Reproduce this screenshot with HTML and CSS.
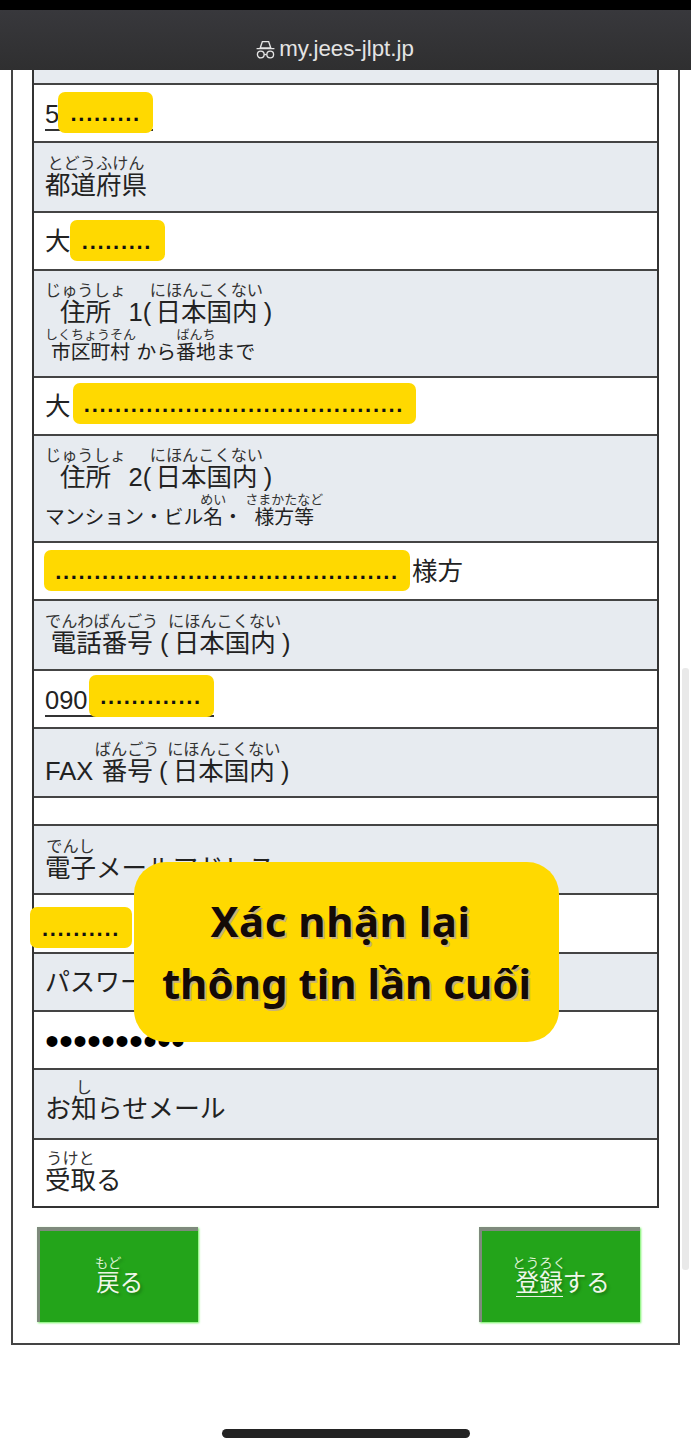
FILE: index.html
```html
<!DOCTYPE html>
<html lang="ja">
<head>
<meta charset="utf-8">
<title>my.jees-jlpt.jp</title>
<link rel="stylesheet" href="styles.css">
</head>
<body>
<div class="screen">
  <header class="browser-bar">
    <div class="address">
      <svg class="incognito" viewBox="0 0 20 20" width="21" height="21" aria-hidden="true">
        <path d="M7 2.5h6l2 6H5zM1.5 9.2h17" fill="none" stroke="currentColor" stroke-width="1.3"/>
        <circle cx="5.5" cy="14.8" r="3.2" fill="none" stroke="currentColor" stroke-width="1.3"/>
        <circle cx="14.5" cy="14.8" r="3.2" fill="none" stroke="currentColor" stroke-width="1.3"/>
        <path d="M8.7 14.8h2.6" fill="none" stroke="currentColor" stroke-width="1.3"/>
      </svg>
      <span>my.jees-jlpt.jp</span>
    </div>
  </header>

  <main class="frame">
    <div class="table">
      <div class="row label h14"></div>

      <div class="row h58">
        <div class="value underlined">5<span class="mask m-post">.........</span></div>
      </div>

      <div class="row label h70 nudge">
        <div class="line"><ruby>都道府県<rt>とどうふけん</rt></ruby></div>
      </div>

      <div class="row h58">
        <div class="value">大<span class="mask m-pref">.........</span></div>
      </div>

      <div class="row label h107 nudge-s">
        <div class="line"><ruby>住所<rt>じゅうしょ</rt></ruby><span class="latin">1(</span><ruby>日本国内<rt>にほんこくない</rt></ruby><span class="paren">)</span></div>
        <div class="line sub"><ruby>市区町村<rt>しくちょうそん</rt></ruby><span class="after-ruby">から</span><ruby>番地<rt>ばんち</rt></ruby>まで</div>
      </div>

      <div class="row h58">
        <div class="value">大<span class="mask m-addr1">.........................................</span></div>
      </div>

      <div class="row label h107 nudge-s">
        <div class="line"><ruby>住所<rt>じゅうしょ</rt></ruby><span class="latin">2(</span><ruby>日本国内<rt>にほんこくない</rt></ruby><span class="paren">)</span></div>
        <div class="line sub">マンション・ビル<ruby>名<rt>めい</rt></ruby>・ <ruby>様方等<rt>さまかたなど</rt></ruby></div>
      </div>

      <div class="row h58">
        <div class="value"><span class="mask m-addr2">............................................</span>様方</div>
      </div>

      <div class="row label h70 nudge">
        <div class="line"><ruby>電話番号<rt>でんわばんごう</rt></ruby><span class="paren-open">(</span><ruby>日本国内<rt>にほんこくない</rt></ruby><span class="paren">)</span></div>
      </div>

      <div class="row h58">
        <div class="value underlined">090<span class="mask m-tel">.............</span></div>
      </div>

      <div class="row label h69 nudge">
        <div class="line"><span class="fax">FAX</span><ruby>番号<rt>ばんごう</rt></ruby><span class="paren-open">(</span><ruby>日本国内<rt>にほんこくない</rt></ruby><span class="paren">)</span></div>
      </div>

      <div class="row h28"></div>

      <div class="row label h69 nudge">
        <div class="line"><ruby>電子<rt>でんし</rt></ruby>メールアドレス</div>
      </div>

      <div class="row h59">
        <div class="value"><span class="mask m-mail">..........</span></div>
      </div>

      <div class="row label h58">
        <div class="value small">パスワード</div>
      </div>

      <div class="row h58">
        <div class="password">••••••••••</div>
      </div>

      <div class="row label h70 lift">
        <div class="line"><span class="wide">お<ruby>知<rt>し</rt></ruby>らせメール</span></div>
      </div>

      <div class="row h68">
        <div class="line"><ruby>受取<rt>うけと</rt></ruby>る</div>
      </div>
    </div>

    <div class="actions">
      <button class="btn" type="button"><ruby>戻<rt>もど</rt></ruby>る</button>
      <button class="btn" type="button"><ruby><span class="under">登録</span><rt>とうろく</rt></ruby>する</button>
    </div>
  </main>

  <div class="scrollbar"></div>

  <aside class="callout">
    <p class="first">Xác nhận lại</p>
    <p>thông tin lần cuối</p>
  </aside>

  <div class="home-indicator"></div>
</div>
</body>
</html>
```
FILE: styles.css
```css
* { box-sizing: border-box; }
html, body { margin: 0; padding: 0; }
body {
  background: #fff;
  color: #222;
  font-family: "Liberation Sans", "Noto Sans CJK JP", sans-serif;
}
.screen {
  position: relative;
  width: 691px;
  height: 1443px;
  overflow: hidden;
  background: #fff;
  border-top: 10px solid #000;
}
.browser-bar {
  height: 60px;
  background: linear-gradient(#38383c, #2f2f30);
  color: #e4e4e4;
  display: flex;
  align-items: flex-end;
  justify-content: center;
  padding: 0 22px 9px 0;
}
.address {
  display: flex;
  align-items: center;
  gap: 3px;
  font-size: 22.3px;
  line-height: 24px;
}
.incognito { flex: none; }
.frame {
  margin: 0 11px;
  width: 669px;
  height: 1275px;
  border: 2px solid #444;
  border-top: 0;
  padding: 0 19px;
}
.table {
  border-left: 2px solid #333;
  border-right: 2px solid #333;
  border-bottom: 2px solid #333;
}
.row {
  display: flex;
  flex-direction: column;
  justify-content: center;
  padding: 0 11px;
  border-bottom: 2px solid #444;
  background: #fff;
  overflow: visible;
}
.row:last-child { border-bottom: 0; }
.label { background: #e7ebf0; }
.nudge { padding-top: 2px; }
.nudge-s { padding-bottom: 2px; }
.lift { padding-bottom: 4px; }
.h14 { height: 15px; }
.h28 { height: 28px; }
.h58 { height: 58px; }
.h59 { height: 59px; }
.h68 { height: 66px; }
.h69 { height: 69px; }
.h70 { height: 70px; }
.h107 { height: 107px; }

.line, .value {
  font-size: 25.5px;
  line-height: 34px;
  white-space: nowrap;
}
.value {
  display: flex;
  align-items: center;
}
.value.small { font-size: 25px; }
.wide { font-size: 25.9px; }
.underlined {
  align-self: flex-start;
  border-bottom: 2px solid #333;
  line-height: 30px;
  margin-top: 4px;
}
ruby { ruby-position: over; ruby-align: center; }
rt {
  font-size: 16.2px;
  line-height: 14px;
  color: #333;
  ruby-align: center;
}
.sub {
  font-size: 19.8px;
  line-height: 26px;
  margin-top: -2px;
}
.sub rt { font-size: 13px; line-height: 11px; }
.after-ruby { margin-left: 2px; }
.latin { margin-left: 3px; padding-left: 7px; }
.paren { margin-left: 2px; }
.paren-open { margin: 0 1px 0 3px; }
.fax { margin-right: 5px; }

.mask {
  display: inline-flex;
  align-items: flex-end;
  justify-content: center;
  background: #ffd900;
  border-radius: 7px;
  height: 41px;
  color: #111;
  font-weight: 700;
  font-size: 22px;
  line-height: 20px;
  letter-spacing: 1.7px;
  padding-bottom: 9px;
}
.m-post { width: 95px; margin-left: -1px; margin-bottom: -4px; margin-top: -8px; }
.m-pref { width: 95px; margin-left: -1px; margin-top: -2px; }
.m-addr1 { width: 343px; margin-left: 2px; margin-top: -6px; }
.m-addr2 { width: 366px; margin-left: -1px; margin-right: 2px; margin-top: -2px; }
.m-tel { width: 125px; height: 42px; margin-bottom: -2px; margin-top: -10px; margin-left: 1px; padding-bottom: 10px; }
.m-mail { width: 102px; margin-left: -15px; margin-top: 8px; }
.password {
  font-size: 40px;
  line-height: 40px;
  color: #000;
  white-space: nowrap;
  margin-top: 1px;
}
.actions {
  display: flex;
  justify-content: space-between;
  padding: 19px 19px 0 5px;
}
.btn {
  width: 161px;
  height: 95px;
  padding: 0;
  background: #23a41a;
  border: 0;
  border-top: 4px solid #7f8a7d;
  border-left: 3px solid #7f8a7d;
  box-shadow: 1px 1px 2px #6cf05a;
  color: #f0f8ea;
  font-family: inherit;
  font-size: 23.5px;
  line-height: 30px;
  text-shadow: 2px 2px 3px rgba(0,0,0,.25);
}
.btn rt { color: #d9f2cf; font-size: 13.5px; line-height: 13px; }
.under {
  display: inline-block;
  line-height: 25px;
  border-bottom: 1px solid #f0f8ea;
}

.scrollbar {
  position: absolute;
  left: 682px;
  top: 658px;
  width: 7px;
  height: 602px;
  border-radius: 3px;
  background: #e9e9e9;
}
.callout {
  position: absolute;
  left: 134px;
  top: 852px;
  width: 425px;
  height: 180px;
  border-radius: 32px;
  background: #ffd900;
  display: flex;
  flex-direction: column;
  align-items: center;
  justify-content: center;
  font-family: "Noto Sans", sans-serif;
  font-weight: 700;
  font-size: 42px;
  line-height: 62px;
  color: #140a05;
  text-shadow: 2px 2px 0 #c9b27a;
}
.callout p { margin: 0; white-space: nowrap; }
.callout .first { margin-right: 12px; letter-spacing: .5px; }
.home-indicator {
  position: absolute;
  left: 222px;
  top: 1419px;
  width: 248px;
  height: 9px;
  border-radius: 5px;
  background: #232323;
}
```
